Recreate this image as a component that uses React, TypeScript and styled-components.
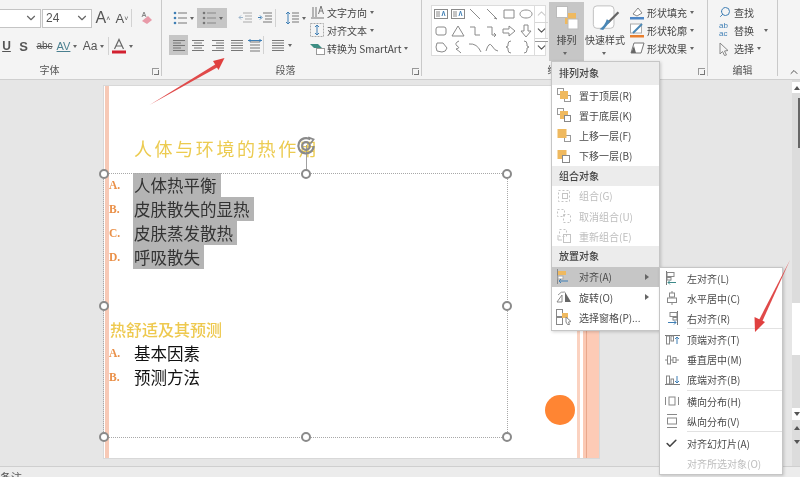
import React from 'react';
import styled, { createGlobalStyle } from 'styled-components';
import { Check, ChevronDown, ChevronUp, Search } from 'lucide-react';

const CJK = '"Noto Sans CJK SC", "Liberation Sans", sans-serif';

const GlobalStyle = createGlobalStyle`
    html, body { margin: 0; padding: 0; background: #e6e6e6; }
    * { box-sizing: border-box; }
`;

const Page = styled.div`
    position: relative;
    width: 800px;
    height: 477px;
    overflow: hidden;
    display: flex;
    flex-direction: column;
    font-family: ${CJK};
    font-size: 10px;
    color: #444;
    filter: blur(0.4px);
`;

const Ribbon = styled.div`
    display: flex;
    flex: none;
    height: 80px;
    background: #f4f4f4;
    border-bottom: 1px solid #cfcfcf;
    position: relative;
`;

const Group = styled.div<{ $w: number }>`
    position: relative;
    flex: none;
    width: ${p => p.$w}px;
    height: 76px;
    border-right: 1px solid #c9c9c9;
    display: flex;
    flex-direction: column;
`;

const GroupBody = styled.div`
    flex: 1;
    display: flex;
    min-height: 0;
`;

const GroupLabel = styled.div<{ $shift?: number }>`
    flex: none;
    height: 18px;
    line-height: 24px;
    text-align: center;
    font-size: 10px;
    color: #555;
    padding-right: ${p => p.$shift ?? 0}px;
`;

const Launcher = styled.span`
    position: absolute;
    right: 2px;
    bottom: 1px;
    width: 7px;
    height: 7px;
    border: 1px solid #999;
    border-width: 1px 0 0 1px;
    &::after {
        content: '';
        position: absolute;
        right: 0;
        bottom: 0;
        width: 4px;
        height: 4px;
        border: 1px solid #777;
        border-width: 0 1px 1px 0;
    }
`;

const Stack = styled.div<{ $w?: number; $pad?: string; $gap?: number }>`
    display: flex;
    flex-direction: column;
    flex: none;
    width: ${p => (p.$w ? `${p.$w}px` : 'auto')};
    padding: ${p => p.$pad ?? '0'};
    gap: ${p => p.$gap ?? 0}px;
`;

const Row = styled.div<{ $h?: number }>`
    display: flex;
    align-items: center;
    height: ${p => p.$h ?? 20}px;
`;

const Slot = styled.div<{ $w: number; $on?: boolean; $h?: number }>`
    flex: none;
    display: flex;
    align-items: center;
    justify-content: center;
    width: ${p => p.$w}px;
    height: ${p => p.$h ?? 20}px;
    background: ${p => (p.$on ? '#c6c6c6' : 'transparent')};
`;

const Combo = styled.div<{ $w: number; $open?: boolean }>`
    flex: none;
    display: flex;
    align-items: center;
    justify-content: space-between;
    width: ${p => p.$w}px;
    height: 19px;
    padding: 0 2px 0 3px;
    margin-right: 1px;
    background: #fff;
    border: 1px solid #c4c4c4;
    border-left-width: ${p => (p.$open ? 0 : 1)}px;
    font-family: "Liberation Sans", sans-serif;
    font-size: 12px;
    color: #555;
`;

const Glyph = styled.span<{ $size?: number; $bold?: boolean; $strike?: boolean; $under?: boolean; $color?: string }>`
    font-family: "Liberation Sans", sans-serif;
    font-size: ${p => p.$size ?? 12}px;
    font-weight: ${p => (p.$bold ? 700 : 400)};
    color: ${p => p.$color ?? '#555'};
    text-decoration: ${p => (p.$strike ? 'line-through' : p.$under ? 'underline' : 'none')};
    line-height: 1;
`;

const Caret = styled.span<{ $gap?: number }>`
    flex: none;
    width: 0;
    height: 0;
    margin-left: ${p => p.$gap ?? 3}px;
    border: 2.5px solid transparent;
    border-top: 3px solid #666;
    border-bottom: 0;
`;

const VDivider = styled.span`
    flex: none;
    width: 1px;
    height: 18px;
    background: #d2d2d2;
`;

const CmdLine = styled.div`
    display: flex;
    align-items: center;
    height: 19.5px;
    font-size: 10px;
    color: #444;
    white-space: nowrap;
`;

const CmdIcon = styled.span<{ $w: number }>`
    flex: none;
    width: ${p => p.$w}px;
    display: flex;
    align-items: center;
`;

const Gallery = styled.div`
    flex: none;
    display: flex;
    margin: 5px 3px 0 9px;
    width: 115px;
    height: 51px;
    background: #fff;
    border: 1px solid #dcdcdc;
`;

const GalleryGrid = styled.div`
    flex: 1;
    display: grid;
    grid-template-columns: repeat(6, 17px);
    grid-auto-rows: 16.5px;
`;

const GalleryCell = styled.div`
    display: flex;
    align-items: center;
    justify-content: center;
`;

const GalleryScroll = styled.div`
    flex: none;
    width: 14px;
    display: flex;
    flex-direction: column;
    border-left: 1px solid #dcdcdc;
`;

const GalleryBtn = styled.div<{ $more?: boolean }>`
    flex: 1;
    display: flex;
    align-items: center;
    justify-content: center;
    border-bottom: 1px solid #d6d6d6;
    box-shadow: ${p => (p.$more ? 'inset 0 2px 0 #fff, inset 0 3px 0 #999' : 'none')};
    &:last-child { border-bottom: 0; }
`;

const BigButton = styled.div<{ $w: number; $on?: boolean }>`
    flex: none;
    width: ${p => p.$w}px;
    height: 59px;
    margin-top: 2px;
    display: flex;
    flex-direction: column;
    align-items: center;
    background: ${p => (p.$on ? '#c6c6c6' : 'transparent')};
    font-size: 10px;
    color: #444;
    line-height: 14px;
    padding-top: 3px;
    & > svg { flex: none; margin-bottom: 2px; }
    & > span:last-child { margin: 5px 0 0 -3px; }
`;

const CollapseBtn = styled.span`
    position: absolute;
    right: 0;
    bottom: 1px;
    width: 12px;
    height: 12px;
    color: #555;
`;

const Workspace = styled.div`
    flex: 1;
    min-height: 0;
    display: flex;
    background: #e6e6e6;
`;

const SlideArea = styled.div`
    flex: 1;
    padding: 6px 0 0 104px;
`;

const Slide = styled.div`
    position: relative;
    width: 495px;
    height: 372px;
    background: #fff;
    padding: 50px 0 0 5px;
    outline: 1px solid #d8d8d8;
`;

const LeftStrip = styled.span`
    position: absolute;
    left: 1px;
    top: 0;
    bottom: 0;
    width: 3.5px;
    background: #f7c9b6;
`;

const RightStrips = styled.span`
    position: absolute;
    right: 0;
    top: 0;
    bottom: 0;
    width: 22px;
    background: linear-gradient(90deg, #fbd2c0 0 3px, #fff 3px 6px, #fbc9b4 6px 9px, #e9a88c 9px 10px, #fdcbb6 10px);
`;

const Dot = styled.span`
    position: absolute;
    left: 441px;
    top: 309px;
    width: 30px;
    height: 30px;
    border-radius: 50%;
    background: #ff8533;
`;

const SlideTitle = styled.div`
    height: 37px;
    margin-left: 25px;
    font-size: 18px;
    line-height: 25px;
    letter-spacing: 2.6px;
    color: #eccb50;
`;

const Bullets = styled.ul`
    list-style: none;
    margin: 0;
    padding: 0;
`;

const Bullet = styled.li`
    display: flex;
    align-items: center;
    height: 24px;
`;

const Marker = styled.span`
    flex: none;
    width: 24px;
    font-family: "Liberation Serif", serif;
    font-weight: 700;
    font-size: 11.5px;
    color: #ea9048;
`;

const BulletText = styled.span<{ $marked?: boolean }>`
    font-size: 16.5px;
    line-height: 24px;
    padding-left: 1px;
    color: ${p => (p.$marked ? '#333' : '#111')};
    background: ${p => (p.$marked ? '#b4b4b4' : 'transparent')};
    padding-right: ${p => (p.$marked ? 4 : 0)}px;
`;

const SubHeading = styled.div`
    margin-top: 48px;
    height: 24px;
    padding-left: 1px;
    font-size: 16px;
    font-weight: 500;
    line-height: 24px;
    color: #eec94f;
`;

const Selection = styled.div`
    position: absolute;
    left: -1px;
    top: 87px;
    width: 405px;
    height: 265px;
    border: 1px dotted #a8a8a8;
`;

const Handle = styled.span<{ $x: number; $y: number }>`
    position: absolute;
    left: ${p => p.$x}%;
    top: ${p => p.$y}%;
    width: 10px;
    height: 10px;
    margin: -5px 0 0 -5px;
    border-radius: 50%;
    background: #fff;
    border: 2px solid #8a8a8a;
`;

const RotateArm = styled.span`
    position: absolute;
    left: 50%;
    top: -29px;
    width: 1px;
    height: 29px;
    background: #a0a0a0;
`;

const RotateKnob = styled.svg`
    position: absolute;
    left: calc(50% - 12px);
    top: -40px;
`;

const Menu = styled.div<{ $left: number; $top: number; $w: number; $tail: number }>`
    position: absolute;
    left: ${p => p.$left}px;
    top: ${p => p.$top}px;
    width: ${p => p.$w}px;
    padding-bottom: ${p => p.$tail}px;
    background: #fff;
    border: 1px solid #c6c6c6;
    box-shadow: 1px 1px 3px rgba(0, 0, 0, 0.18);
`;

const MenuHeader = styled.div<{ $h: number }>`
    height: ${p => p.$h}px;
    line-height: ${p => p.$h - 1}px;
    padding-left: 7px;
    background: #ececec;
    font-size: 10px;
    font-weight: 500;
    color: #444;
`;

const MenuItem = styled.div<{ $on?: boolean; $off?: boolean; $h?: number }>`
    position: relative;
    display: flex;
    align-items: center;
    height: ${p => p.$h ?? 20.2}px;
    background: ${p => (p.$on ? '#c6c6c6' : 'transparent')};
    color: ${p => (p.$off ? '#bdbdbd' : '#4a4a4a')};
    font-size: 10px;
    white-space: nowrap;
`;

const MenuIcon = styled.span<{ $pad: number }>`
    flex: none;
    width: 27px;
    padding-left: ${p => p.$pad}px;
    display: flex;
    align-items: center;
`;

const SubArrow = styled.span`
    position: absolute;
    right: 10px;
    top: 7px;
    width: 0;
    height: 0;
    border: 3px solid transparent;
    border-left: 4px solid #666;
    border-right: 0;
`;

const MenuSep = styled.div`
    height: 1px;
    margin: 0 0 0.7px 27px;
    background: #e2e2e2;
`;

const Scrollbar = styled.div`
    flex: none;
    width: 8px;
    display: flex;
    flex-direction: column;
    background: #dcdcdc;
    padding-top: 2px;
`;

const ScrollBtn = styled.div<{ $h: number; $mt?: number; $white?: boolean; $arrow?: 'up' | 'down' }>`
    flex: none;
    position: relative;
    height: ${p => p.$h}px;
    margin-top: ${p => p.$mt ?? 0}px;
    background: ${p => (p.$white ? '#fff' : 'transparent')};
    &::after {
        content: '';
        display: ${p => (p.$arrow ? 'block' : 'none')};
        position: absolute;
        left: 2px;
        top: ${p => p.$h / 2 - 2}px;
        border: 3px solid transparent;
        border-top: ${p => (p.$arrow === 'down' ? '4px solid #555' : '0')};
        border-bottom: ${p => (p.$arrow === 'up' ? '4px solid #555' : '0')};
    }
`;

const ScrollThumbTop = styled.div`
    flex: none;
    width: 2px;
    height: 50px;
    margin: 5px 0 0 6px;
    background: #666;
`;

const StatusBar = styled.div`
    flex: none;
    height: 11px;
    overflow: hidden;
    background: #ececec;
    border-top: 1px solid #cfcfcf;
    font-size: 11px;
    line-height: 20px;
    color: #555;
`;

const Overlay = styled.svg`
    position: absolute;
    left: 0;
    top: 0;
    pointer-events: none;
`;

const LINE = '#777';
const BLUE = '#3f7fb5';
const GOLD = '#efb95f';

const Lines: React.FC<{ kind: 'left' | 'center' | 'right' | 'just' }> = ({ kind }) => {
    const rows = [0, 1, 2, 3, 4];
    const span = (i: number) => {
        const short = i % 2 === 1;
        if (kind === 'just' || !short) return [1, 13];
        if (kind === 'left') return [1, 9];
        if (kind === 'right') return [5, 13];
        return [3, 11];
    };
    return (
        <svg width="14" height="13" viewBox="0 0 14 13" stroke={LINE}>
            {rows.map(i => <path key={i} d={`M${span(i)[0]} ${1.5 + i * 2.5}H${span(i)[1]}`} />)}
        </svg>
    );
};

const ListIcon: React.FC<{ numbered?: boolean }> = ({ numbered }) => (
    <svg width="14" height="14" viewBox="0 0 14 14" fill="none">
        {[2, 7, 12].map(y => (
            <g key={y}>
                <circle cx="2" cy={y} r="1.3" fill={numbered ? '#777' : BLUE} />
                <path d={`M5 ${y}H14`} stroke={numbered ? '#888' : LINE} />
            </g>
        ))}
    </svg>
);

const Indent: React.FC<{ more?: boolean }> = ({ more }) => (
    <svg width="14" height="12" viewBox="0 0 14 12" fill="none" stroke={more ? LINE : '#aaa'}>
        <path d="M5 1H14M7 4H14M7 7H14M5 10H14" />
        <path d={more ? 'M0 5.5H3M2 3.5L4 5.5L2 7.5' : 'M5 5.5H1M3 3.5L1 5.5L3 7.5'} stroke={more ? BLUE : '#9fb7cc'} />
    </svg>
);

const ICONS: Record<string, React.ReactNode> = {
    front: <svg width="14" height="14" fill="none"><rect x="0.5" y="0.5" width="6" height="6" stroke="#999" /><rect x="7.5" y="7.5" width="6" height="6" stroke="#999" /><rect x="3" y="3" width="8" height="8" fill={GOLD} /></svg>,
    back: <svg width="14" height="14" fill="none"><rect x="0.5" y="0.5" width="6" height="6" stroke="#999" /><rect x="3" y="3" width="8" height="8" fill={GOLD} /><rect x="7.5" y="7.5" width="6" height="6" fill="#fff" stroke="#888" /></svg>,
    up: <svg width="14" height="14" fill="none"><rect x="7.5" y="7.5" width="6" height="6" stroke="#999" /><rect x="0.5" y="1" width="9" height="9" fill={GOLD} /></svg>,
    down: <svg width="14" height="14" fill="none"><rect x="0.5" y="1" width="9" height="9" fill={GOLD} /><rect x="5.5" y="6.5" width="7" height="7" fill="#fff" stroke="#888" /></svg>,
    group: <svg width="14" height="14" fill="none" stroke="#c4c4c4"><rect x="1.5" y="1.5" width="11" height="11" strokeDasharray="2 2" /><rect x="5.5" y="4.5" width="5" height="5" /></svg>,
    ungroup: <svg width="14" height="14" fill="none" stroke="#c4c4c4"><rect x="0.5" y="0.5" width="7" height="7" strokeDasharray="2 2" /><rect x="6.5" y="5.5" width="7" height="8" strokeDasharray="2 2" /></svg>,
    regroup: <svg width="14" height="14" fill="none" stroke="#c4c4c4"><rect x="2.5" y="0.5" width="7" height="7" strokeDasharray="2 2" /><rect x="6.5" y="5.5" width="7" height="8" /><path d="M1 6V11H5" /></svg>,
    align: <svg width="14" height="15" fill="none"><path d="M1.5 0V15" stroke="#888" /><rect x="2" y="2" width="8" height="4" fill={GOLD} /><rect x="2" y="7" width="5" height="3" fill="#fff" stroke="#aaa" /><path d="M12 12H3M5 10L3 12L5 14" stroke={BLUE} /></svg>,
    rotate: <svg width="16" height="12" fill="none"><path d="M1 11L6 4V11Z" stroke="#888" /><path d="M9 1L15 11H9Z" fill="#666" /><path d="M2 4Q5 0 9 1" stroke="#999" /></svg>,
    pane: <svg width="16" height="16" fill="none"><rect x="0.5" y="0.5" width="6" height="7" stroke="#888" /><rect x="0.5" y="8.5" width="6" height="7" stroke="#888" /><rect x="6" y="4" width="6" height="5" fill={GOLD} /><path d="M10 8L15 12.5L12.5 13L13.5 15.5L11.5 15.5L10 13Z" fill="#fff" stroke="#888" /></svg>,
    aLeft: <svg width="14" height="14" fill="none"><path d="M1.5 0V14" stroke="#777" /><rect x="2" y="1.5" width="7" height="4" stroke="#888" /><rect x="2" y="6.5" width="4" height="2.5" stroke="#888" /><path d="M11 11.5H3M5 9.5L3 11.5L5 13.5" stroke="#3d8a8a" /></svg>,
    aCenter: <svg width="14" height="14" fill="none" stroke="#888"><path d="M7 0V14" /><rect x="4.5" y="2" width="5" height="4" fill="#fff" /><rect x="2.5" y="7" width="9" height="4.5" fill="#fff" /></svg>,
    aRight: <svg width="14" height="14" fill="none"><path d="M12.5 0V14" stroke="#777" /><rect x="5" y="1.5" width="7" height="4" stroke="#888" /><rect x="8" y="6.5" width="4" height="2.5" stroke="#888" /><path d="M3 11.5H11M9 9.5L11 11.5L9 13.5" stroke={BLUE} /></svg>,
    aTop: <svg width="15" height="12" fill="none"><path d="M0 1.5H15" stroke="#777" /><rect x="1.5" y="2" width="3" height="8" stroke="#888" /><rect x="6" y="2" width="2.5" height="5" stroke="#888" /><path d="M12 10V3M10 5L12 3L14 5" stroke={BLUE} /></svg>,
    aMiddle: <svg width="14" height="12" fill="none" stroke="#888"><path d="M0 6H14" /><rect x="2.5" y="2" width="3" height="8" fill="#fff" /><rect x="8" y="3.5" width="3" height="5" fill="#fff" /></svg>,
    aBottom: <svg width="15" height="12" fill="none"><path d="M0 10.5H15" stroke="#777" /><rect x="1.5" y="2" width="3" height="8" stroke="#888" /><rect x="6" y="5" width="2.5" height="5" stroke="#888" /><path d="M12 2V9M10 7L12 9L14 7" stroke={BLUE} /></svg>,
    dH: <svg width="14" height="12" fill="none" stroke="#888"><path d="M0.5 2V10M13.5 2V10" /><rect x="4" y="2" width="6" height="8" /></svg>,
    dV: <svg width="14" height="14" fill="none" stroke="#888"><path d="M2 0.5H12M2 13.5H12" /><rect x="2.5" y="4" width="9" height="6" /></svg>,
    check: <Check size={13} strokeWidth={3} color="#444" />,
    none: null,
};

const SHAPES: string[] = [
    '', '', 'M2 2L12 12', 'M2 2L12 12M12 12l-3-1', 'M2 3H12V11H2Z', 'M7 3C11 3 13 5 13 7S11 11 7 11S1 9 1 7S3 3 7 3Z',
    'M4 3H10Q12 3 12 5V9Q12 11 10 11H4Q2 11 2 9V5Q2 3 4 3Z', 'M7 2L13 12H1Z', 'M2 3H7V11H12', 'M2 3H7V11H11M11 11l-2-2M11 11l-2 2', 'M1 5H7V2L13 7L7 12V9H1Z', 'M5 1H9V7H12L7 13L2 7H5Z',
    'M3 3H9L13 8Q12 12 8 12L3 11Q1 7 3 3Z', 'M8 1Q3 3 6 6Q10 8 5 9Q8 11 10 13', 'M1 4Q9 3 13 12', 'M1 11Q4 1 7 6T13 11', 'M9 1Q6 1 6 4V6L4 7L6 8V10Q6 13 9 13', 'M5 1Q8 1 8 4V6L10 7L8 8V10Q8 13 5 13',
];

const Shape: React.FC<{ d: string; index: number }> = ({ d, index }) => (
    <svg width="14" height="14" viewBox="0 0 14 14" fill="none" stroke="#8a8a8a">
        {index < 2 ? (
            <g>
                <rect x="0.5" y="2.5" width="13" height="9" />
                <path d="M2 5H6M2 7H6M2 9H6" />
                <path d="M8 9L9.5 4L11 9" stroke={BLUE} />
            </g>
        ) : <path d={d} />}
    </svg>
);

const groupOne = [
    { icon: 'front', label: '置于顶层(R)' },
    { icon: 'back', label: '置于底层(K)' },
    { icon: 'up', label: '上移一层(F)' },
    { icon: 'down', label: '下移一层(B)' },
];
const groupTwo = [
    { icon: 'group', label: '组合(G)' },
    { icon: 'ungroup', label: '取消组合(U)' },
    { icon: 'regroup', label: '重新组合(E)' },
];
const alignSections = [
    [
        { icon: 'aLeft', label: '左对齐(L)' },
        { icon: 'aCenter', label: '水平居中(C)' },
        { icon: 'aRight', label: '右对齐(R)' },
    ],
    [
        { icon: 'aTop', label: '顶端对齐(T)' },
        { icon: 'aMiddle', label: '垂直居中(M)' },
        { icon: 'aBottom', label: '底端对齐(B)' },
    ],
    [
        { icon: 'dH', label: '横向分布(H)' },
        { icon: 'dV', label: '纵向分布(V)' },
    ],
    [
        { icon: 'check', label: '对齐幻灯片(A)' },
        { icon: 'none', label: '对齐所选对象(O)', off: true },
    ],
];

const handles = [[0, 0], [50, 0], [100, 0], [0, 50], [100, 50], [0, 100], [50, 100], [100, 100]];

const FontGroup: React.FC = () => (
    <Group $w={162}>
        <GroupBody>
            <Stack $pad="8px 0 0 0" $gap={8}>
                <Row>
                    <Combo $w={41} $open><span /><ChevronDown size={14} color="#666" /></Combo>
                    <Combo $w={50}>24<ChevronDown size={14} color="#666" /></Combo>
                    <Slot $w={20}><Glyph $size={16}>A</Glyph><Glyph $size={7}>˄</Glyph></Slot>
                    <Slot $w={18}><Glyph $size={13}>A</Glyph><Glyph $size={7}>˅</Glyph></Slot>
                    <VDivider />
                    <Slot $w={26}>
                        <svg width="15" height="15" fill="none"><path d="M4 10L10 5L14 9L9 13Z" fill="#e89aa8" /><path d="M4 6L6 1L8 6M5 4.5H7" stroke="#888" /></svg>
                    </Slot>
                </Row>
                <Row>
                    <Slot $w={13}><Glyph $size={12} $bold $under>U</Glyph></Slot>
                    <Slot $w={21}><Glyph $size={13} $bold>S</Glyph></Slot>
                    <Slot $w={21}><Glyph $size={10} $strike>abc</Glyph></Slot>
                    <Slot $w={24}><Glyph $size={11} $under $color="#4a7f8f">AV</Glyph><Caret /></Slot>
                    <Slot $w={29}><Glyph $size={12}>Aa</Glyph><Caret /></Slot>
                    <VDivider />
                    <Slot $w={27}>
                        <svg width="14" height="16"><path d="M2.5 11L7 1.5L11.5 11M4 8H10" fill="none" stroke="#666" strokeWidth="1.2" /><rect x="0" y="12.5" width="14" height="3" fill="#d2202f" /></svg>
                        <Caret />
                    </Slot>
                </Row>
            </Stack>
        </GroupBody>
        <GroupLabel $shift={62}>字体</GroupLabel>
        <Launcher />
    </Group>
);

const ParagraphGroup: React.FC = () => (
    <Group $w={260}>
        <GroupBody>
            <Stack $w={148} $pad="8px 0 0 7px" $gap={7}>
                <Row>
                    <Slot $w={28}><ListIcon /><Caret /></Slot>
                    <Slot $w={30} $on><ListIcon numbered /><Caret /></Slot>
                    <Slot $w={8} />
                    <Slot $w={20}><Indent /></Slot>
                    <Slot $w={20}><Indent more /></Slot>
                    <VDivider />
                    <Slot $w={6} />
                    <Slot $w={26}>
                        <svg width="14" height="14" fill="none"><path d="M7 2H14M7 5H14M7 8H14M7 11H14" stroke={LINE} /><path d="M3 1V13M1 3L3 1L5 3M1 11L3 13L5 11" stroke={BLUE} /></svg>
                        <Caret />
                    </Slot>
                </Row>
                <Row>
                    <Slot $w={19} $on><Lines kind="left" /></Slot>
                    <Slot $w={20}><Lines kind="center" /></Slot>
                    <Slot $w={20}><Lines kind="right" /></Slot>
                    <Slot $w={18}><Lines kind="just" /></Slot>
                    <Slot $w={17}>
                        <svg width="14" height="13" fill="none"><path d="M2 3H12M2 6H12M2 9H12M2 12H12" stroke={LINE} /><path d="M0 1.5H14M2 0V3M12 0V3" stroke={BLUE} /></svg>
                    </Slot>
                    <VDivider />
                    <Slot $w={5} />
                    <Slot $w={24}><Lines kind="just" /><Caret /></Slot>
                </Row>
            </Stack>
            <Stack $pad="3px 0 0 0">
                <CmdLine>
                    <CmdIcon $w={17}><svg width="15" height="15" fill="none"><path d="M1 13H14M3 2V12M6 2V12M11 1L8.5 9M11 1L13.5 9M9.5 6H12.5" stroke={LINE} /></svg></CmdIcon>
                    文字方向<Caret />
                </CmdLine>
                <CmdLine>
                    <CmdIcon $w={17}><svg width="14" height="14" fill="none"><rect x="0.5" y="0.5" width="13" height="13" stroke="#aaa" strokeDasharray="2 1" /><path d="M7 2V12M5 4L7 2L9 4M5 10L7 12L9 10" stroke={BLUE} /></svg></CmdIcon>
                    对齐文本<Caret />
                </CmdLine>
                <CmdLine>
                    <CmdIcon $w={17}><svg width="15" height="12" fill="none"><path d="M0 1H8L12 5H4Z" fill="#3e8e84" /><rect x="6.5" y="5.5" width="8" height="6" fill="#fff" stroke="#999" /></svg></CmdIcon>
                    转换为 SmartArt<Caret />
                </CmdLine>
            </Stack>
        </GroupBody>
        <GroupLabel $shift={12}>段落</GroupLabel>
        <Launcher />
    </Group>
);

const DrawingGroup: React.FC = () => (
    <Group $w={286}>
        <GroupBody>
            <Gallery>
                <GalleryGrid>
                    {SHAPES.map((d, i) => <GalleryCell key={i}><Shape d={d} index={i} /></GalleryCell>)}
                </GalleryGrid>
                <GalleryScroll>
                    <GalleryBtn><ChevronUp size={13} color="#ccc" /></GalleryBtn>
                    <GalleryBtn><ChevronDown size={13} color="#555" /></GalleryBtn>
                    <GalleryBtn $more><ChevronDown size={13} color="#555" /></GalleryBtn>
                </GalleryScroll>
            </Gallery>
            <BigButton $w={35} $on>
                <svg width="24" height="26"><rect x="10" y="8" width="11" height="11" fill={GOLD} /><rect x="1.5" y="1.5" width="11" height="11" fill="#fff" stroke="#bbb" /><rect x="13" y="14" width="10" height="10" fill="#fff" stroke="#bbb" /></svg>
                <span>排列</span>
                <Caret />
            </BigButton>
            <BigButton $w={42}>
                <svg width="32" height="26" viewBox="0 0 32 29" fill="none"><rect x="3" y="1" width="23" height="25" rx="4" fill="#fff" stroke="#bbb" /><path d="M31 8L19 20" stroke="#666" strokeWidth="2.5" /><path d="M22 18L14 28L10 27Q16 23 18 16Z" fill="#4a87b5" /></svg>
                <span>快速样式</span>
                <Caret />
            </BigButton>
            <Stack $pad="3px 0 0 4px">
                <CmdLine>
                    <CmdIcon $w={17}><svg width="15" height="15" fill="none"><path d="M3 9L8 3L12 8L7 11Z" fill="#fff" stroke="#888" /><rect x="0" y="12" width="14" height="2.5" fill="#4d86c6" /></svg></CmdIcon>
                    形状填充<Caret />
                </CmdLine>
                <CmdLine>
                    <CmdIcon $w={17}><svg width="15" height="15" fill="none"><rect x="0.5" y="1" width="11" height="9" fill="#fff" stroke="#aaa" /><path d="M3 10L12 1" stroke="#4a87b5" strokeWidth="2" /><rect x="0" y="12" width="14" height="2.5" fill="#e87f2e" /></svg></CmdIcon>
                    形状轮廓<Caret />
                </CmdLine>
                <CmdLine>
                    <CmdIcon $w={17}><svg width="15" height="13"><path d="M4 1H14L11 11H1Z" fill="#fff" stroke="#777" /><path d="M1 11L4 4L6 11Z" fill="#666" /></svg></CmdIcon>
                    形状效果<Caret />
                </CmdLine>
            </Stack>
        </GroupBody>
        <GroupLabel $shift={14}>绘图</GroupLabel>
        <Launcher />
    </Group>
);

const EditGroup: React.FC = () => (
    <Group $w={70}>
        <GroupBody>
            <Stack $pad="3px 0 0 11px">
                <CmdLine><CmdIcon $w={15}><Search size={12} color={BLUE} style={{ transform: 'scaleX(-1)' }} /></CmdIcon>查找</CmdLine>
                <CmdLine>
                    <CmdIcon $w={15}><Glyph $size={8} $color={BLUE}>ab<br />ac</Glyph></CmdIcon>
                    替换<Caret $gap={10} />
                </CmdLine>
                <CmdLine>
                    <CmdIcon $w={15}><svg width="10" height="14" fill="none"><path d="M1 1L9 8.5L5.5 9L7.5 13L5.5 13.5L3.5 9.5L1 12Z" stroke="#888" /></svg></CmdIcon>
                    选择<Caret />
                </CmdLine>
            </Stack>
        </GroupBody>
        <GroupLabel>编辑</GroupLabel>
    </Group>
);

const App: React.FC = () => (
    <Page>
        <GlobalStyle />
        <Ribbon>
            <FontGroup />
            <ParagraphGroup />
            <DrawingGroup />
            <EditGroup />
            <CollapseBtn><ChevronUp size={12} /></CollapseBtn>
        </Ribbon>

        <Workspace>
            <SlideArea>
                <Slide>
                    <LeftStrip />
                    <RightStrips />
                    <Dot />
                    <SlideTitle>人体与环境的热作用</SlideTitle>
                    <Bullets>
                        <Bullet><Marker>A.</Marker><BulletText $marked>人体热平衡</BulletText></Bullet>
                        <Bullet><Marker>B.</Marker><BulletText $marked>皮肤散失的显热</BulletText></Bullet>
                        <Bullet><Marker>C.</Marker><BulletText $marked>皮肤蒸发散热</BulletText></Bullet>
                        <Bullet><Marker>D.</Marker><BulletText $marked>呼吸散失</BulletText></Bullet>
                    </Bullets>
                    <SubHeading>热舒适及其预测</SubHeading>
                    <Bullets>
                        <Bullet><Marker>A.</Marker><BulletText>基本因素</BulletText></Bullet>
                        <Bullet><Marker>B.</Marker><BulletText>预测方法</BulletText></Bullet>
                    </Bullets>
                    <Selection>
                        <RotateArm />
                        <RotateKnob width="24" height="24" viewBox="0 0 22 22" fill="none" stroke="#8a8a8a">
                            <path d="M18 11A7 7 0 1 1 15 5" strokeWidth="2" />
                            <circle cx="11" cy="11" r="3.5" strokeWidth="2" />
                            <path d="M13 3L18 5L15 9" strokeWidth="1.5" />
                        </RotateKnob>
                        {handles.map(([x, y]) => <Handle key={`${x}-${y}`} $x={x} $y={y} />)}
                    </Selection>
                </Slide>
            </SlideArea>
            <Scrollbar>
                <ScrollBtn $h={11} $white $arrow="up" />
                <ScrollThumbTop />
                <ScrollBtn $h={52} $mt={155} $white />
                <ScrollBtn $h={12} $mt={53} $white $arrow="down" />
                <ScrollBtn $h={10} $mt={3} $arrow="up" />
                <ScrollBtn $h={10} $mt={4} $arrow="down" />
            </Scrollbar>
        </Workspace>

        <StatusBar>备注</StatusBar>

        <Menu $left={551} $top={61} $w={109} $tail={3}>
            <MenuHeader $h={23}>排列对象</MenuHeader>
            {groupOne.map(item => (
                <MenuItem key={item.label}><MenuIcon $pad={5}>{ICONS[item.icon]}</MenuIcon>{item.label}</MenuItem>
            ))}
            <MenuHeader $h={20}>组合对象</MenuHeader>
            {groupTwo.map(item => (
                <MenuItem key={item.label} $off><MenuIcon $pad={5}>{ICONS[item.icon]}</MenuIcon>{item.label}</MenuItem>
            ))}
            <MenuHeader $h={20.5}>放置对象</MenuHeader>
            <MenuItem $on><MenuIcon $pad={4}>{ICONS.align}</MenuIcon>对齐(A)<SubArrow /></MenuItem>
            <MenuItem><MenuIcon $pad={4}>{ICONS.rotate}</MenuIcon>旋转(O)<SubArrow /></MenuItem>
            <MenuItem><MenuIcon $pad={4}>{ICONS.pane}</MenuIcon>选择窗格(P)...</MenuItem>
        </Menu>

        <Menu $left={659} $top={267} $w={124} $tail={1}>
            {alignSections.map((section, i) => (
                <React.Fragment key={i}>
                    {i > 0 && <MenuSep />}
                    {section.map(item => (
                        <MenuItem key={item.label} $h={20} $off={'off' in item}>
                            <MenuIcon $pad={5}>{ICONS[item.icon]}</MenuIcon>{item.label}
                        </MenuItem>
                    ))}
                </React.Fragment>
            ))}
        </Menu>

        <Overlay width="800" height="477" viewBox="0 0 800 477">
            <path d="M149.5 105L216 64L218 67Z" fill="#e04a4a" />
            <path d="M224.5 58L213 61L218.5 70Z" fill="#e0403f" />
            <path d="M790 260L759 320L762 322Z" fill="#e04a4a" />
            <path d="M755 332L754.5 317L765 322Z" fill="#e0403f" />
        </Overlay>
    </Page>
);

export default App;
